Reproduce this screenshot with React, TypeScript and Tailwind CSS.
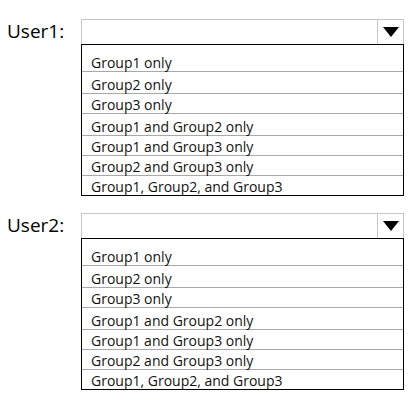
const options = [
  "Group1 only",
  "Group2 only",
  "Group3 only",
  "Group1 and Group2 only",
  "Group1 and Group3 only",
  "Group2 and Group3 only",
  "Group1, Group2, and Group3",
];

// row heights measured off the picture (they are not quite even)
const rowH = ["h-[21px]", "h-[22px]", "h-[20px]", "h-[22px]", "h-[20px]", "h-[20px]", "h-[19px]"];

function Picker({ label }: { label: string }) {
  return (
    <div className="flex">
      <div className="w-[74px] h-[25px] flex items-center text-[19px] text-black leading-none">{label}</div>
      <div className="w-[323px] flex flex-col">
        <div className="h-[25px] flex border border-b-0 border-[#c6c6c6] bg-white">
          <div className="flex-1" />
          <div className="w-[26px] border-l border-[#c6c6c6] flex items-center justify-center">
            <svg width="16" height="10" viewBox="0 0 16 10">
              <path d="M0 0 L16 0 L8 10 Z" fill="#000" />
            </svg>
          </div>
        </div>
        <div className="border border-black flex flex-col">
          <div className="h-[6px]" />
          {options.map((o, i) => (
            <div
              key={o}
              className={`${rowH[i]} pl-[9px] flex items-end pb-[1px] text-[14px] leading-none text-[#111] ${
                i < options.length - 1 ? "border-b border-[#a8a8a8]" : ""
              }`}
            >
              {o}
            </div>
          ))}
        </div>
      </div>
    </div>
  );
}

export default function App() {
  return (
    <div
      className="w-[411px] h-[402px] bg-white pt-[19px] pl-[7px] flex flex-col gap-[17px]"
      style={{ fontFamily: '"Open Sans", "Noto Sans", sans-serif' }}
    >
      <Picker label="User1:" />
      <Picker label="User2:" />
    </div>
  );
}
